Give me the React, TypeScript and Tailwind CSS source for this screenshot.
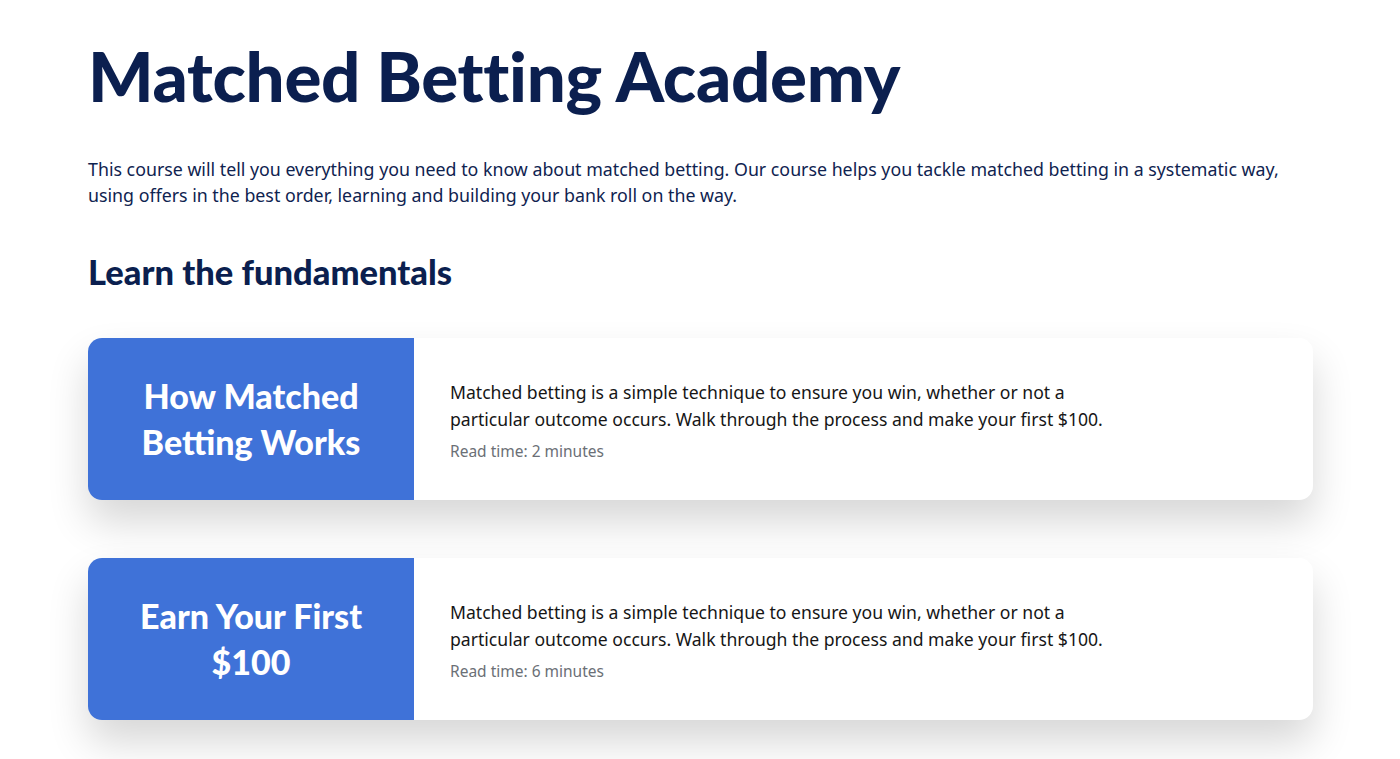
const courses = [
  {
    title: ['How Matched', 'Betting Works'],
    text: 'Matched betting is a simple technique to ensure you win, whether or not a particular outcome occurs. Walk through the process and make your first $100.',
    read: 'Read time: 2 minutes',
  },
  {
    title: ['Earn Your First', '$100'],
    text: 'Matched betting is a simple technique to ensure you win, whether or not a particular outcome occurs. Walk through the process and make your first $100.',
    read: 'Read time: 6 minutes',
  },
];

const heading = { fontFamily: 'Lato, "Noto Sans", sans-serif' };

export default function App() {
  return (
    <div className="min-h-screen bg-white font-['Noto_Sans',sans-serif] text-[#0b1f4f]">
      <div className="ml-[88px] w-[1225px] pt-[36px]">
        <h1 style={heading} className="text-[69px] font-black leading-[80px] tracking-[-0.3px]">
          Matched Betting Academy
        </h1>

        <p className="mt-[40px] text-[17.8px] leading-[26px] text-[#0f2350]">
          This course will tell you everything you need to know about matched betting. Our course helps you tackle matched betting in a systematic way,
          using offers in the best order, learning and building your bank roll on the way.
        </p>

        <h2 style={heading} className="mt-[44px] text-[34.5px] font-black leading-[40px]">
          Learn the fundamentals
        </h2>

        <div className="mt-[46px] flex flex-col gap-[58px]">
          {courses.map((c) => (
            <div
              key={c.read}
              className="flex h-[162px] overflow-hidden rounded-[14px] bg-white shadow-[0_22px_40px_rgba(0,0,0,0.16)]"
            >
              <div className="flex w-[326px] shrink-0 flex-col items-center justify-center bg-[#3f72d8] text-white">
                {c.title.map((t) => (
                  <span key={t} style={heading} className="text-[34px] font-black leading-[46px]">
                    {t}
                  </span>
                ))}
              </div>
              <div className="flex flex-col justify-center pl-[36px] pt-[2px]">
                <p className="max-w-[660px] text-[17.6px] leading-[27px] text-[#161616]">{c.text}</p>
                <p className="mt-[8px] text-[15.5px] leading-[20px] text-[#6b6f76]">{c.read}</p>
              </div>
            </div>
          ))}
        </div>
      </div>
    </div>
  );
}
